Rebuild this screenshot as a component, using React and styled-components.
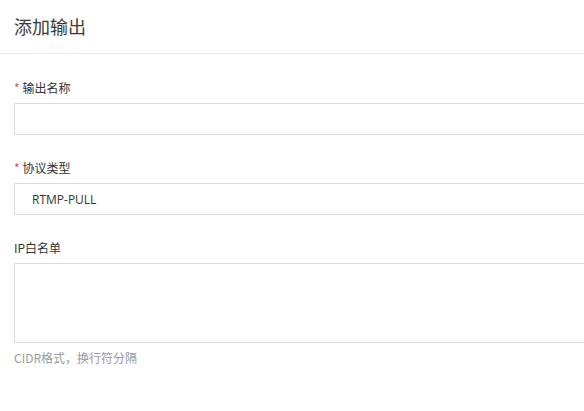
import React from 'react'
import styled, { createGlobalStyle } from 'styled-components';

const GlobalStyle = createGlobalStyle`
  body {
    margin: 0;
    background: #fff;
    overflow: hidden;
    font-family: "Noto Sans CJK SC", "Noto Sans", sans-serif;
  }
`;

export default function App() {
    const fields = [
        { label: '输出名称', required: true, value: '' },
        { label: '协议类型', required: true, value: 'RTMP-PULL' },
    ]

    return (
        <Page>
            <GlobalStyle />
            <Header>
                <Title>添加输出</Title>
            </Header>
            <Form>
                {
                    fields.map((field) => (
                        <Field key={field.label}>
                            <Label>
                                {field.required && <Star>*</Star>}
                                {field.label}
                            </Label>
                            <Input readOnly value={field.value} />
                        </Field>
                    ))
                }
                <Field>
                    <Label>IP白名单</Label>
                    <TextArea />
                    <Help>CIDR格式，换行符分隔</Help>
                </Field>
            </Form>
        </Page>
    )
}

const Page = styled.div`
  width: 584px;
  height: 411px;
  overflow: hidden;
`;

const Header = styled.div`
  height: 54px;
  box-sizing: border-box;
  padding: 13px 14px 0;
  border-bottom: 1px solid #ebebeb;
`;

const Title = styled.h1`
  margin: 0;
  font-size: 18px;
  line-height: 26px;
  font-weight: 400;
  color: #3a3a3a;
`;

const Form = styled.div`
  padding: 26px 14px 0;
  width: 660px;
`;

const Field = styled.div`
  display: flex;
  flex-direction: column;
  gap: 7px;
  margin-bottom: 25px;
`;

const Label = styled.label`
  font-size: 12px;
  line-height: 16px;
  color: #333;
`;

const Star = styled.span`
  color: #e54545;
  margin-right: 3px;
`;

const Input = styled.input`
  box-sizing: border-box;
  height: 32px;
  width: 100%;
  border: 1px solid #dcdcdc;
  border-radius: 0;
  padding: 0 17px;
  font-family: "Open Sans", "Noto Sans", sans-serif;
  font-size: 12px;
  color: #333;
  outline: none;
`;

const TextArea = styled.textarea`
  box-sizing: border-box;
  height: 80px;
  width: 100%;
  border: 1px solid #dcdcdc;
  resize: none;
  outline: none;
`;

const Help = styled.div`
  font-size: 12px;
  line-height: 16px;
  color: #999;
`;
